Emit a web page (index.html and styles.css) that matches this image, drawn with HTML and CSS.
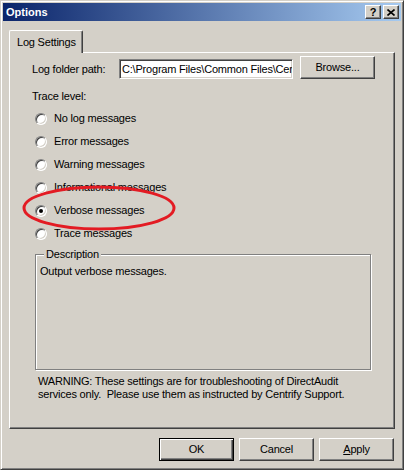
FILE: index.html
```html
<!DOCTYPE html>
<html>
<head>
<meta charset="utf-8">
<link rel="stylesheet" href="styles.css">
</head>
<body>
<div class="window">
  <div class="titlebar">
    <span class="title">Options</span>
    <div class="caption-btns">
      <span class="cbtn help">?</span>
      <span class="cbtn close"><svg width="8" height="7" viewBox="0 0 8 7"><path d="M0.5 0.5 L7.5 6.5 M7.5 0.5 L0.5 6.5" stroke="#000" stroke-width="1.6" fill="none"/></svg></span>
    </div>
  </div>
  <div class="client">
    <div class="tabs"><div class="tab">Log Settings</div></div>
    <div class="panel">
      <div class="path-row">
        <span class="path-label">Log folder path:</span>
        <div class="input">C:\Program Files\Common Files\Cer</div>
        <div class="btn browse">Browse...</div>
      </div>
      <div class="trace-label">Trace level:</div>
      <div class="radios">
        <div class="radio-row"><span class="radio"></span><span>No log messages</span></div>
        <div class="radio-row"><span class="radio"></span><span>Error messages</span></div>
        <div class="radio-row"><span class="radio"></span><span>Warning messages</span></div>
        <div class="radio-row"><span class="radio"></span><span>Informational messages</span></div>
        <div class="radio-row"><span class="radio checked"></span><span>Verbose messages</span></div>
        <div class="radio-row"><span class="radio"></span><span>Trace messages</span></div>
      </div>
      <fieldset class="group">
        <legend>Description</legend>
        <div class="desc">Output verbose messages.</div>
      </fieldset>
      <p class="warning">WARNING: These settings are for troubleshooting of DirectAudit<br>services only.&nbsp; Please use them as instructed by Centrify Support.</p>
    </div>
    <div class="buttons">
      <div class="btn default">OK</div>
      <div class="btn">Cancel</div>
      <div class="btn"><u>A</u>pply</div>
    </div>
  </div>
  <svg class="annotation" width="156" height="48" viewBox="0 0 156 48"><ellipse cx="78" cy="23" rx="75" ry="21" fill="none" stroke="#e31b23" stroke-width="3"/></svg>
</div>
</body>
</html>
```
FILE: styles.css
```css
html, body {
  margin: 0;
  padding: 0;
  background: #d4d0c8;
}
body {
  font-family: "Liberation Sans", Arial, sans-serif;
  font-size: 11px;
  letter-spacing: -0.2px;
  color: #000;
}
.window {
  position: relative;
  width: 404px;
  height: 470px;
  box-sizing: border-box;
  background: #d4d0c8;
  border: 1px solid;
  border-color: #d4d0c8 #404040 #404040 #d4d0c8;
  box-shadow: inset 1px 1px #fff, inset -1px -1px #808080;
  padding: 2px;
  display: flex;
  flex-direction: column;
}
.titlebar {
  height: 18px;
  display: flex;
  align-items: center;
  justify-content: space-between;
  background: linear-gradient(to right, #0a246a, #a6caf0);
  padding-left: 3px;
}
.title {
  color: #fff;
  font-weight: bold;
  font-size: 11px;
  letter-spacing: 0;
}
.caption-btns {
  display: flex;
  gap: 2px;
  margin-right: 2px;
}
.cbtn {
  width: 16px;
  height: 14px;
  box-sizing: border-box;
  background: #d4d0c8;
  border: 1px solid;
  border-color: #fff #404040 #404040 #fff;
  box-shadow: inset -1px -1px #808080;
  display: flex;
  align-items: center;
  justify-content: center;
  font-weight: bold;
  font-size: 11px;
  line-height: 12px;
  letter-spacing: 0;
}
.client {
  padding: 9px 6px 0;
  display: flex;
  flex-direction: column;
}
.tabs {
  display: flex;
  height: 22px;
}
.tab {
  position: relative;
  z-index: 1;
  width: 74px;
  height: 23px;
  box-sizing: border-box;
  background: #d4d0c8;
  border-left: 1px solid #fff;
  border-top: 1px solid #fff;
  border-right: 1px solid #404040;
  border-top-left-radius: 2px;
  border-top-right-radius: 2px;
  box-shadow: inset -1px 0 #808080;
  padding: 5px 0 0 7px;
  line-height: 13px;
  white-space: nowrap;
}
.panel {
  height: 377px;
  box-sizing: border-box;
  border-top: 1px solid #fff;
  border-left: 1px solid #fff;
  border-right: 1px solid #404040;
  border-bottom: 1px solid #404040;
  box-shadow: inset -1px -1px #808080;
  display: flex;
  flex-direction: column;
}
.path-row {
  display: flex;
  align-items: flex-end;
  margin-top: 3px;
  padding-left: 22px;
  height: 23px;
}
.path-label {
  width: 87px;
  line-height: 20px;
  white-space: nowrap;
}
.input {
  width: 174px;
  height: 20px;
  box-sizing: border-box;
  background: #fff;
  border: 1px solid;
  border-color: #808080 #fff #fff #808080;
  box-shadow: inset 1px 1px #404040, inset -1px -1px #d4d0c8;
  padding: 1px 0 0 2px;
  line-height: 16px;
  white-space: nowrap;
  overflow: hidden;
  margin-right: 7px;
}
.btn {
  width: 75px;
  height: 23px;
  box-sizing: border-box;
  background: #d4d0c8;
  border: 1px solid;
  border-color: #fff #404040 #404040 #fff;
  box-shadow: inset -1px -1px #808080;
  display: flex;
  align-items: center;
  justify-content: center;
  line-height: 13px;
}
.btn.default {
  border-color: #000;
  box-shadow: inset 1px 1px #fff, inset -1px -1px #404040, inset -2px -2px #808080;
}
.trace-label {
  margin-top: 11px;
  padding-left: 22px;
  line-height: 13px;
}
.radios {
  margin-top: 4px;
  display: flex;
  flex-direction: column;
}
.radio-row {
  height: 23px;
  display: flex;
  align-items: center;
  padding-left: 25px;
  gap: 7px;
  line-height: 13px;
}
.radio {
  width: 12px;
  height: 12px;
  box-sizing: border-box;
  border-radius: 50%;
  background: #fff;
  border: 1px solid;
  border-color: #808080 #fff #fff #808080;
  box-shadow: inset 1px 1px #404040, inset -1px -1px #d4d0c8;
  display: flex;
  align-items: center;
  justify-content: center;
}
.radio.checked::after {
  content: "";
  width: 4px;
  height: 4px;
  border-radius: 50%;
  background: #000;
}
.group {
  margin: 2px 0 0 25px;
  width: 336px;
  box-sizing: border-box;
  border: 1px solid #808080;
  box-shadow: inset 1px 1px #fff, 1px 1px #fff;
  padding: 4px 4px 0;
  min-inline-size: 0;
}
.group legend {
  margin-left: 4px;
  padding: 0 2px;
  line-height: 14px;
  background: #d4d0c8;
}
.desc {
  height: 104px;
  line-height: 13px;
}
.warning {
  margin: 5px 0 0 28px;
  line-height: 13px;
  white-space: nowrap;
}
.buttons {
  margin-top: 9px;
  margin-right: 1px;
  display: flex;
  justify-content: flex-end;
  gap: 5px;
}
.annotation {
  position: absolute;
  left: 20px;
  top: 184px;
}
```
